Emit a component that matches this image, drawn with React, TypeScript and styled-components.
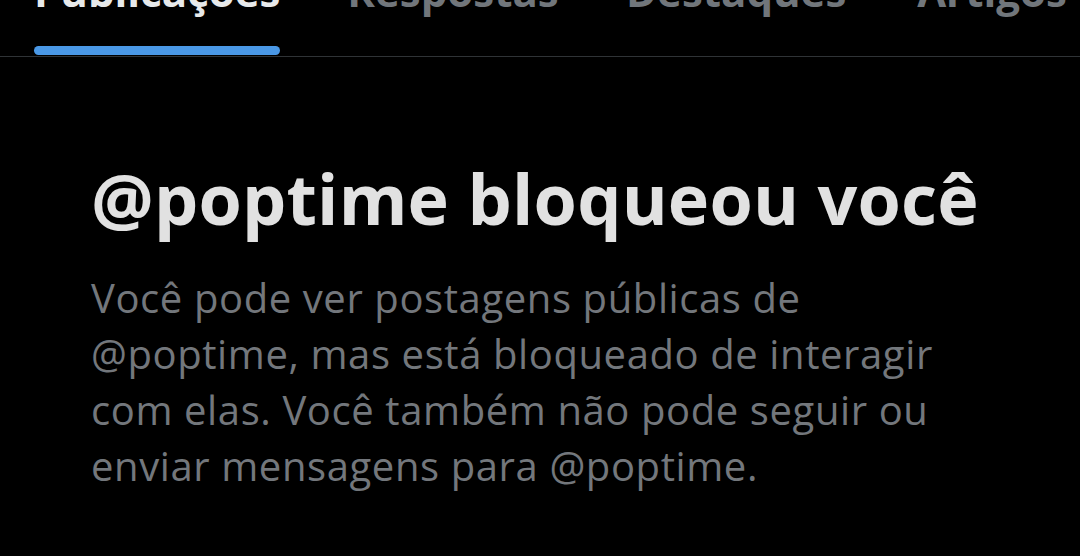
import React from "react";
import styled, { createGlobalStyle } from "styled-components";

const Global = createGlobalStyle`
  html, body { margin: 0; padding: 0; background: #000; }
  body { font-family: "Open Sans", "Noto Sans", sans-serif; }
`;

const Page = styled.div`
  width: 1080px;
  height: 556px;
  background: #000;
  overflow: hidden;
  display: flex;
  flex-direction: column;
`;

const TabBar = styled.nav`
  display: flex;
  height: 56px;
  flex-shrink: 0;
  border-bottom: 1px solid #2f3336;
  padding-left: 34px;
`;

const Tab = styled.div<{ $width: number }>`
  width: ${(p) => p.$width}px;
  flex-shrink: 0;
  display: flex;
  flex-direction: column;
  justify-content: space-between;
  align-items: stretch;
`;

const TabLabel = styled.span<{ $active?: boolean }>`
  display: block;
  text-align: center;
  font-size: 42px;
  font-weight: 700;
  line-height: 42px;
  margin-top: -30px;
  color: ${(p) => (p.$active ? "#e7e9ea" : "#71767b")};
  white-space: nowrap;
`;

const Indicator = styled.div`
  height: 9px;
  margin-bottom: 1px;
  border-radius: 5px;
  background: #4a98e6;
`;

const Content = styled.section`
  padding: 101px 0 0 91px;
  display: flex;
  flex-direction: column;
`;

const Title = styled.h1`
  margin: 0;
  font-size: 70px;
  font-weight: 700;
  color: #e1e1e1;
  line-height: 80px;
  letter-spacing: 0.2px;
  white-space: nowrap;
`;

const Body = styled.p`
  margin: 32px 0 0;
  font-size: 40px;
  line-height: 56px;
  letter-spacing: 0.6px;
  color: #73777c;
  white-space: nowrap;
`;

export default function App() {
  return (
    <Page>
      <Global />
      <TabBar>
        <Tab $width={246}>
          <TabLabel $active>Publicações</TabLabel>
          <Indicator />
        </Tab>
        <Tab $width={346}>
          <TabLabel>Respostas</TabLabel>
        </Tab>
        <Tab $width={218}>
          <TabLabel>Destaques</TabLabel>
        </Tab>
        <Tab $width={296}>
          <TabLabel>Artigos</TabLabel>
        </Tab>
      </TabBar>
      <Content>
        <Title>@poptime bloqueou você</Title>
        <Body>
          Você pode ver postagens públicas de
          <br />
          @poptime, mas está bloqueado de interagir
          <br />
          com elas. Você também não pode seguir ou
          <br />
          enviar mensagens para @poptime.
        </Body>
      </Content>
    </Page>
  );
}
